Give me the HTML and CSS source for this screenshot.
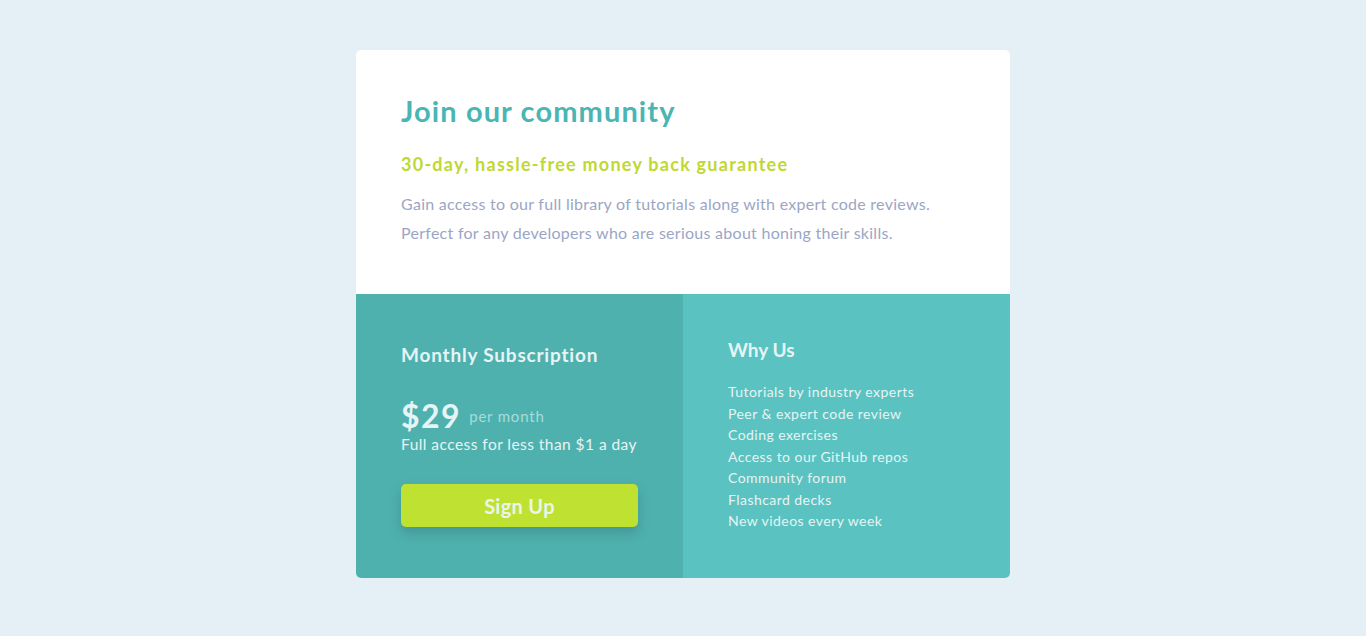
FILE: index.html
```html
<!DOCTYPE html>
<html lang="en">
<head>
<meta charset="utf-8">
<title>Single price grid</title>
<link rel="stylesheet" href="styles.css">
</head>
<body>
<main class="card">
  <section class="intro">
    <h1 class="intro-title">Join our community</h1>
    <h2 class="intro-sub">30-day, hassle-free money back guarantee</h2>
    <p class="intro-text">Gain access to our full library of tutorials along with expert code reviews. Perfect for any developers who are serious about honing their skills.</p>
  </section>
  <div class="bottom">
    <section class="sub">
      <h3 class="sub-title">Monthly Subscription</h3>
      <div class="price"><span class="price-amount">$29</span><span class="price-per">per month</span></div>
      <p class="price-note">Full access for less than $1 a day</p>
      <button class="btn">Sign Up</button>
    </section>
    <section class="why">
      <h3 class="why-title">Why Us</h3>
      <ul class="why-list">
        <li>Tutorials by industry experts</li>
        <li>Peer &amp; expert code review</li>
        <li>Coding exercises</li>
        <li>Access to our GitHub repos</li>
        <li>Community forum</li>
        <li>Flashcard decks</li>
        <li>New videos every week</li>
      </ul>
    </section>
  </div>
</main>
</body>
</html>
```

FILE: styles.css
```css
* { box-sizing: border-box; }
html, body { margin: 0; padding: 0; }
body {
  background: #e4eff6;
  font-family: Lato, "Liberation Sans", sans-serif;
  padding-top: 50px;
  display: flex;
  justify-content: center;
}
.card {
  width: 654px;
  border-radius: 5px;
  overflow: hidden;
  background: #fff;
}
.intro {
  padding: 44px 45px 45px;
  height: 244px;
}
.intro-title {
  margin: 0;
  font-size: 29px;
  line-height: 34px;
  font-weight: 700;
  letter-spacing: 1.1px;
  color: #4ab5b3;
}
.intro-sub {
  margin: 24px 0 0;
  font-size: 18px;
  line-height: 24px;
  font-weight: 700;
  letter-spacing: 1.25px;
  color: #c0d832;
}
.intro-text {
  margin: 13px 0 0;
  font-size: 16px;
  line-height: 29px;
  letter-spacing: 0.27px;
  color: #9ba6c5;
  max-width: 560px;
}
.bottom {
  display: flex;
  height: 284px;
}
.sub {
  flex: 1;
  background: #4fb1ae;
  padding: 48px 45px 0;
  color: #e6f4f5;
}
.sub-title {
  margin: 0;
  font-size: 19px;
  line-height: 26px;
  font-weight: 700;
  letter-spacing: 0.8px;
}
.price {
  margin-top: 30px;
  display: flex;
  align-items: center;
  gap: 8px;
}
.price-amount {
  font-size: 32px;
  line-height: 36px;
  font-weight: 700;
  letter-spacing: 1.5px;
}
.price-per {
  font-size: 15px;
  letter-spacing: 0.8px;
  color: #a6dcdc;
  margin-top: 0;
}
.price-note {
  margin: 0;
  font-size: 15.5px;
  line-height: 20px;
  letter-spacing: 0.45px;
}
.btn {
  margin-top: 30px;
  width: 237px;
  height: 43px;
  border: 0;
  border-radius: 5px;
  background: #bfe131;
  color: #eaf5ee;
  font-family: inherit;
  font-size: 20px;
  font-weight: 700;
  letter-spacing: 0.3px;
  box-shadow: 0 6px 12px rgba(40, 90, 90, 0.3);
}
.why {
  flex: 1;
  background: #5ac2c0;
  padding: 43px 45px 0;
  color: #e6f4f5;
}
.why-title {
  margin: 0;
  font-size: 19px;
  line-height: 26px;
  font-weight: 700;
}
.why-list {
  list-style: none;
  margin: 18px 0 0;
  padding: 0;
  font-size: 14px;
  line-height: 21.5px;
  letter-spacing: 0.45px;
}
```
